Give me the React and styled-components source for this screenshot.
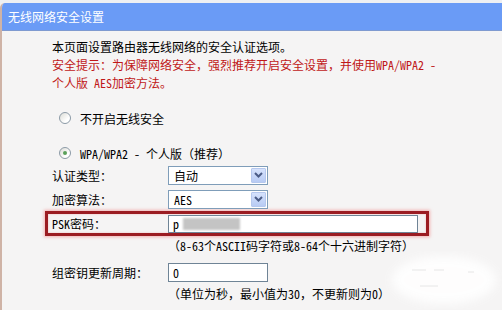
import styled, { createGlobalStyle } from 'styled-components';

const GlobalStyle = createGlobalStyle`
  html, body {
    margin: 0;
    padding: 0;
    background: #eef0f3;
  }
  body {
    font-family: "Noto Sans Mono CJK SC", "Noto Sans CJK SC", sans-serif;
    font-size: 12px;
    color: #000000;
  }
`;

const Frame = styled.div`
  position: relative;
  width: 502px;
  height: 310px;
  padding-top: 3px;
  box-sizing: border-box;
  overflow: hidden;
  background: #eef0f3;
`;

const Panel = styled.section`
  height: 100%;
  background: #f5f4f4;
  border-left: 2px solid #cfb3a6;
  border-top-left-radius: 5px;
  overflow: hidden;
`;

const Header = styled.h2`
  margin: 0;
  height: 27px;
  padding-left: 6px;
  background: #6a9bf6;
  border-bottom: 1px solid #7f9ad0;
  color: #ffffff;
  font-size: 12px;
  font-weight: normal;
  line-height: 27px;
`;

const Body = styled.div`
  padding: 7px 0 0 50px;
`;

const Intro = styled.p`
  margin: 0;
  line-height: 18px;
  white-space: nowrap;
`;

const Warn = styled.span`
  color: #c01818;
`;

const RadioRow = styled.label`
  display: flex;
  align-items: center;
  gap: 9px;
  height: 18px;
  margin-top: 17px;
  padding-left: 7px;
`;

const Radio = styled.span`
  position: relative;
  width: 10px;
  height: 10px;
  border: 1px solid #8c9aa6;
  border-radius: 50%;
  background: linear-gradient(135deg, #dcdcd6, #ffffff 70%);
  &::after {
    content: '';
    display: ${p => (p.$checked ? 'block' : 'none')};
    position: absolute;
    left: 3px;
    top: 3px;
    width: 4px;
    height: 4px;
    border-radius: 50%;
    background: #5aa05a;
  }
`;

const Form = styled.div`
  width: 366px;
  margin-top: 1px;
`;

const FieldRow = styled.div`
  display: grid;
  grid-template-columns: 116px auto;
  align-items: center;
  justify-items: start;
  height: 24px;
  box-sizing: border-box;
  ${p =>
    p.$highlight &&
    `
    height: 25px;
    margin: 0 -11px 0 -7px;
    padding-left: 4px;
    border: 3px solid #9b1c22;
    box-shadow: 0 0 3px 1px rgba(240, 120, 120, 0.55), inset 0 0 2px rgba(240, 120, 120, 0.5);
  `}
`;

const Label = styled.span`
  white-space: nowrap;
`;

const SelectBox = styled.div`
  display: flex;
  align-items: center;
  width: 100px;
  height: 19px;
  box-sizing: border-box;
  border: 1px solid #7f9db9;
  background: #ffffff;
`;

const SelectText = styled.span`
  flex: 1;
  padding-left: 5px;
`;

const ArrowButton = styled.span`
  display: flex;
  align-items: center;
  justify-content: center;
  width: 15px;
  height: 15px;
  margin-right: 1px;
  box-sizing: border-box;
  border: 1px solid #b6c8ee;
  border-radius: 1px;
  background: linear-gradient(#d6e2fc, #b8cbf4);
`;

const TextInput = styled.div`
  display: flex;
  align-items: center;
  width: ${p => p.$width}px;
  height: ${p => p.$height || 19}px;
  box-sizing: border-box;
  padding-left: 4px;
  border: 1px solid #6f8496;
  background: #ffffff;
`;

const Masked = styled.span`
  width: 57px;
  height: 12px;
  margin-left: 4px;
  background: #c4c4c4;
  filter: blur(0.8px);
`;

const Hint = styled.div`
  padding-left: 116px;
  line-height: 20px;
  height: 24px;
  white-space: nowrap;
`;

const Watermark = styled.svg`
  position: absolute;
  right: 0;
  bottom: 0;
  width: 130px;
  height: 70px;
  pointer-events: none;
`;

const Chevron = () => (
  <svg width="9" height="6" viewBox="0 0 9 6">
    <path d="M1 1 L4.5 4.5 L8 1" fill="none" stroke="#4b5c86" strokeWidth="2" />
  </svg>
);

const Select = ({ value }) => (
  <SelectBox>
    <SelectText>{value}</SelectText>
    <ArrowButton>
      <Chevron />
    </ArrowButton>
  </SelectBox>
);

export default function App() {
  return (
    <Frame>
      <GlobalStyle />
      <Panel>
        <Header>无线网络安全设置</Header>
        <Body>
          <Intro>
            本页面设置路由器无线网络的安全认证选项。
            <br />
            <Warn>
              安全提示：为保障网络安全，强烈推荐开启安全设置，并使用WPA/WPA2 -
              <br />
              个人版 AES加密方法。
            </Warn>
          </Intro>

          <RadioRow>
            <Radio />
            不开启无线安全
          </RadioRow>
          <RadioRow>
            <Radio $checked />
            WPA/WPA2 - 个人版（推荐）
          </RadioRow>

          <Form>
            <FieldRow>
              <Label>认证类型：</Label>
              <Select value="自动" />
            </FieldRow>
            <FieldRow>
              <Label>加密算法：</Label>
              <Select value="AES" />
            </FieldRow>
            <FieldRow $highlight>
              <Label>PSK密码：</Label>
              <TextInput $width={250} $height={18}>
                p
                <Masked />
              </TextInput>
            </FieldRow>
            <Hint>（8-63个ASCII码字符或8-64个十六进制字符）</Hint>
            <FieldRow>
              <Label>组密钥更新周期：</Label>
              <TextInput $width={100}>0</TextInput>
            </FieldRow>
            <Hint>（单位为秒，最小值为30，不更新则为0）</Hint>
          </Form>
        </Body>
      </Panel>
      <Watermark viewBox="0 0 130 70">
        <defs>
          <filter id="soft">
            <feGaussianBlur stdDeviation="5" />
          </filter>
        </defs>
        <ellipse cx="72" cy="40" rx="52" ry="24" fill="#ffffff" opacity="0.9" filter="url(#soft)" />
        <path d="M40 30 h14 M62 30 h10 M96 32 h6 M48 46 h18" stroke="#e6e6e6" strokeWidth="1" />
      </Watermark>
    </Frame>
  );
}
